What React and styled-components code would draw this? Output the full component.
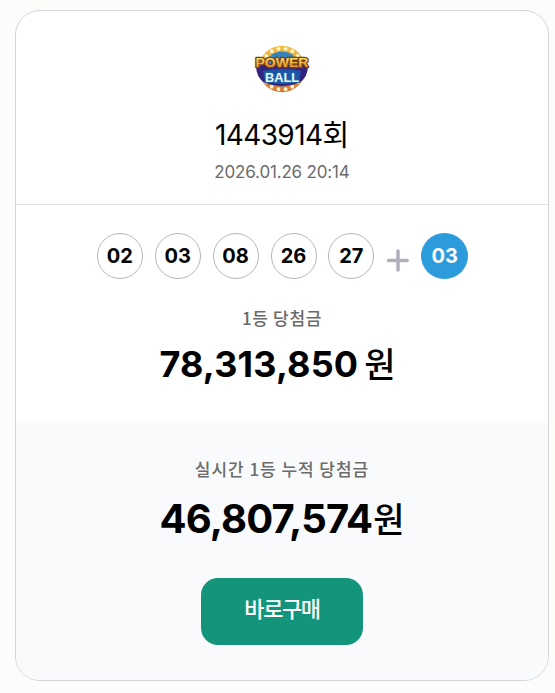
import React from "react";
import styled, { createGlobalStyle } from "styled-components";

const Global = createGlobalStyle`
  * { box-sizing: border-box; }
  body { margin: 0; background: #fdfcfa; font-family: Inter, "Noto Sans CJK KR", sans-serif; color: #000; }
`;
const Page = styled.main`
  height: 693px;
  padding: 10px 6px 12px 15px;
  overflow: hidden;
`;
const Card = styled.article`
  height: 671px;
  border: 1px solid #d5d5d8;
  border-radius: 25px;
  background: #fff;
  overflow: hidden;
  display: flex;
  flex-direction: column;
`;
const Header = styled.header`
  height: 194px;
  padding-top: 33px;
  border-bottom: 1px solid #e3e3e3;
  display: flex;
  flex-direction: column;
  align-items: center;
`;
const Result = styled.section`
  height: 218px;
  padding-top: 28px;
  display: flex;
  flex-direction: column;
  align-items: center;
`;
const Jackpot = styled.section`
  flex: 1;
  padding-top: 34px;
  background: #f8fafc;
  display: flex;
  flex-direction: column;
  align-items: center;
`;
const Round = styled.h1`
  margin: 21px 0 0;
  height: 40px;
  display: flex;
  font-size: 28px;
  font-weight: 400;
  line-height: 40px;
  letter-spacing: -0.6px;
  white-space: nowrap;
`;
const Time = styled.time`
  margin-top: 5px;
  font-size: 17px;
  line-height: 24px;
  letter-spacing: -0.17px;
  color: #6b6b6b;
  white-space: nowrap;
`;
const Balls = styled.div`
  display: flex;
  height: 46px;
  margin-left: 1px;
  gap: 11.9px;
`;
const Ball = styled.span`
  width: ${(p) => (p.$bonus ? "47px" : "46px")};
  height: 46px;
  border-radius: 50%;
  border: 1px solid ${(p) => (p.$bonus ? "#2b9bdc" : "#b4b4be")};
  background: ${(p) => (p.$bonus ? "#2b9bdc" : "#fff")};
  color: ${(p) => (p.$bonus ? "#fff" : "#000")};
  font-size: 20px;
  font-weight: 700;
  line-height: 44px;
  text-align: center;
`;
const Plus = styled.svg`
  width: 23px;
  height: 23px;
  margin-top: 16px;
`;
const Label = styled.p`
  margin: 0;
  height: 24px;
  font-family: "Noto Sans CJK KR", sans-serif;
  font-size: 17px;
  font-weight: 500;
  line-height: 24px;
  letter-spacing: ${(p) => p.$spacing || "0"};
  color: #6b6b6b;
  white-space: nowrap;
`;
const Amount = styled.p`
  margin: 0;
  display: flex;
  font-size: ${(p) => p.$size};
  font-weight: 700;
  line-height: 48px;
  letter-spacing: ${(p) => p.$spacing};
  white-space: nowrap;
`;
const Unit = styled.span`
  margin-left: ${(p) => p.$gap || "0"};
  font-family: "Noto Sans CJK KR", sans-serif;
  font-size: ${(p) => p.$size};
  font-weight: ${(p) => p.$weight || 400};
  line-height: ${(p) => p.$line};
  letter-spacing: 0;
`;
const PrizeRow = styled.div`
  margin: 10px 9px 0 0;
`;
const PrizeLabel = styled.div`
  margin-top: 27px;
`;
const TotalRow = styled.div`
  margin-top: 14px;
`;
const Buy = styled.button`
  width: 162px;
  height: 67px;
  margin-top: 35px;
  padding: 0 0 9px;
  border: 0;
  border-radius: 17px;
  background: #14957b;
  color: #fff;
  font-family: "Noto Sans CJK KR", sans-serif;
  font-size: 22px;
  font-weight: 500;
  letter-spacing: -1.4px;
`;
const LogoSvg = styled.svg`
  width: 58px;
  height: 50px;
  flex: none;
`;

function Logo() {
  const bulbs = Array.from({ length: 18 }, (_, i) => {
    const a = (i * Math.PI) / 9;
    return <circle key={i} cx={29 + 20.5 * Math.cos(a)} cy={25 + 20.5 * Math.sin(a)} r="1.9" fill="#fff6c4" />;
  });
  return (
    <LogoSvg viewBox="0 0 58 50" aria-label="Power Ball">
      <defs>
        <linearGradient id="gold" x1="0" y1="0" x2="0" y2="1">
          <stop offset="0.2" stopColor="#ffe15a" />
          <stop offset="0.8" stopColor="#e8912c" />
        </linearGradient>
        <linearGradient id="rim" x1="0" y1="0" x2="0" y2="1">
          <stop offset="0" stopColor="#efc04a" />
          <stop offset="1" stopColor="#d5743a" />
        </linearGradient>
      </defs>
      <circle cx="29" cy="25" r="23.3" fill="url(#rim)" />
      {bulbs}
      <circle cx="29" cy="25" r="17.5" fill="#3583b8" />
      <path d="M3 21H55Q55 34 46 39 29 45 12 39 3 34 3 21Z" fill="#33257f" />
      <path d="M10 27Q29 23 48 27L46 38Q29 42 12 38Z" fill="#1c55a8" />
      <g fontFamily="Liberation Sans, sans-serif" fontWeight="700" textAnchor="middle" strokeLinejoin="round">
        <g stroke="#74401f" strokeWidth="2.4" paintOrder="stroke">
          <text x="29" y="23" fontSize="13" textLength="53" lengthAdjust="spacingAndGlyphs" fill="url(#gold)">POWER</text>
        </g>
        <text x="29" y="38" fontSize="13" textLength="34" lengthAdjust="spacingAndGlyphs" fill="#e4fbff" stroke="#2467ad" strokeWidth="1.5" paintOrder="stroke">BALL</text>
      </g>
    </LogoSvg>
  );
}

export default function App() {
  return (
    <>
      <Global />
      <Page>
        <Card>
          <Header>
            <Logo />
            <Round>1443914<Unit $size="29px" $line="36px">회</Unit></Round>
            <Time>2026.01.26 20:14</Time>
          </Header>
          <Result>
            <Balls>
              {["02", "03", "08", "26", "27"].map((n) => <Ball key={n}>{n}</Ball>)}
              <Plus viewBox="0 0 23 23" fill="none" stroke="#b0b0ba" strokeWidth="3.5" strokeLinecap="round">
                <path d="M12 2V21M2.5 11.5H21.2" />
              </Plus>
              <Ball $bonus>03</Ball>
            </Balls>
            <PrizeLabel><Label $spacing="0.65px">1등 당첨금</Label></PrizeLabel>
            <PrizeRow>
              <Amount $size="36px" $spacing="0.15px">78,313,850<Unit $size="34px" $weight={500} $line="45px" $gap="6px">원</Unit></Amount>
            </PrizeRow>
          </Result>
          <Jackpot>
            <Label $spacing="0.95px">실시간 1등 누적 당첨금</Label>
            <TotalRow>
              <Amount $size="40px" $spacing="-0.85px">46,807,574<Unit $size="34px" $weight={500} $line="46px" $gap="1px">원</Unit></Amount>
            </TotalRow>
            <Buy type="button">바로구매</Buy>
          </Jackpot>
        </Card>
      </Page>
    </>
  );
}
